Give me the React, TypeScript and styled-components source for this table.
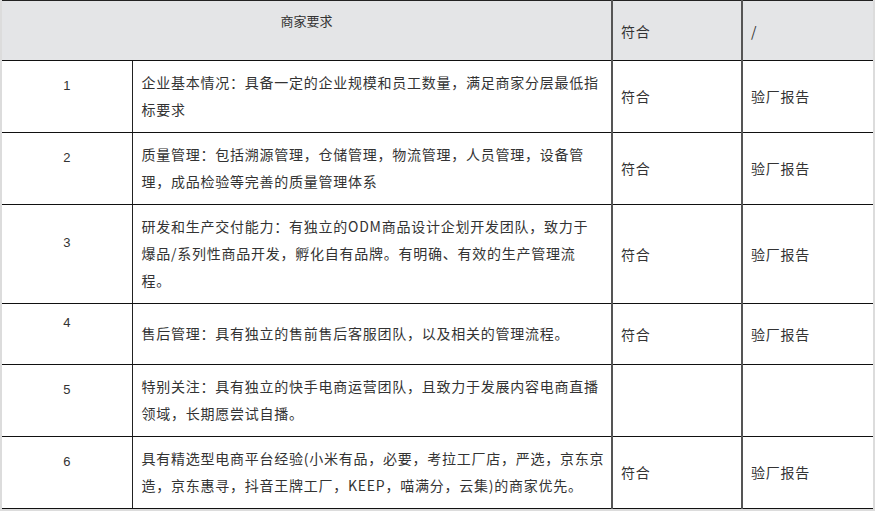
import React from 'react';
import styled, { createGlobalStyle } from 'styled-components';

const GlobalStyle = createGlobalStyle`
  html, body {
    margin: 0;
    padding: 0;
    background: #dcdcdc;
  }
  body {
    font-family: "Noto Sans CJK SC", "Liberation Sans", sans-serif;
    color: #333;
  }
`;

const Page = styled.div`
  width: 875px;
  height: 511px;
  overflow: hidden;
  padding-left: 2px;
  box-sizing: border-box;
`;

const Table = styled.table`
  width: 871px;
  border-collapse: collapse;
  table-layout: fixed;
  background: #fff;
  font-size: 14px;
  letter-spacing: 0.75px;
`;

const HeadRow = styled.tr`
  height: 60px;
  background: #e4e5e7;
`;

const HeadCell = styled.th<{ $wide?: boolean }>`
  font-weight: normal;
  text-align: ${p => (p.$wide ? 'center' : 'left')};
  vertical-align: ${p => (p.$wide ? 'top' : 'middle')};
  font-size: ${p => (p.$wide ? '13px' : '14px')};
  letter-spacing: ${p => (p.$wide ? '0' : '0.75px')};
  line-height: 20px;
  padding: ${p => (p.$wide ? '10px 0 0' : '0 8px')};
  border-top: 1px solid #222;
  border-bottom: 1px solid #111;
  border-left: ${p => (p.$wide ? 'none' : '2px solid #555')};
`;

const NoCell = styled.td`
  font-family: "Liberation Sans", "Noto Sans CJK SC", sans-serif;
  text-align: center;
  vertical-align: middle;
  font-size: 13px;
  letter-spacing: 0;
  line-height: 22px;
  padding: 8px 0 30px;
  border-bottom: 1px solid #111;
  border-right: 1px solid #222;
`;

const TextCell = styled.td`
  vertical-align: middle;
  line-height: 27px;
  padding: 8px 6px 9px 9px;
  border-bottom: 1px solid #111;
`;

const Line = styled.span`
  display: block;
  white-space: nowrap;
`;

const ValueCell = styled.td`
  vertical-align: middle;
  line-height: 27px;
  padding: 8px;
  border-bottom: 1px solid #111;
  border-left: 2px solid #555;
`;

type Row = { no: number; lines: string[]; result: string; proof: string };

const rows: Row[] = [
  {
    no: 1,
    lines: ['企业基本情况：具备一定的企业规模和员工数量，满足商家分层最低指', '标要求'],
    result: '符合',
    proof: '验厂报告',
  },
  {
    no: 2,
    lines: ['质量管理：包括溯源管理，仓储管理，物流管理，人员管理，设备管', '理，成品检验等完善的质量管理体系'],
    result: '符合',
    proof: '验厂报告',
  },
  {
    no: 3,
    lines: [
      '研发和生产交付能力：有独立的ODM商品设计企划开发团队，致力于',
      '爆品/系列性商品开发，孵化自有品牌。有明确、有效的生产管理流',
      '程。',
    ],
    result: '符合',
    proof: '验厂报告',
  },
  {
    no: 4,
    lines: ['售后管理：具有独立的售前售后客服团队，以及相关的管理流程。'],
    result: '符合',
    proof: '验厂报告',
  },
  {
    no: 5,
    lines: ['特别关注：具有独立的快手电商运营团队，且致力于发展内容电商直播', '领域，长期愿尝试自播。'],
    result: '',
    proof: '',
  },
  {
    no: 6,
    lines: [
      '具有精选型电商平台经验(小米有品，必要，考拉工厂店，严选，京东京',
      '造，京东惠寻，抖音王牌工厂，KEEP，喵满分，云集)的商家优先。',
    ],
    result: '符合',
    proof: '验厂报告',
  },
];

export default function App() {
  return (
    <Page>
      <GlobalStyle />
      <Table>
        <colgroup>
          <col style={{ width: 130 }} />
          <col style={{ width: 480 }} />
          <col style={{ width: 130 }} />
          <col style={{ width: 131 }} />
        </colgroup>
        <thead>
          <HeadRow>
            <HeadCell $wide colSpan={2}>商家要求</HeadCell>
            <HeadCell>符合</HeadCell>
            <HeadCell>/</HeadCell>
          </HeadRow>
        </thead>
        <tbody>
          {rows.map(r => (
            <tr key={r.no}>
              <NoCell>{r.no}</NoCell>
              <TextCell>
                {r.lines.map((l, i) => (
                  <Line key={i}>{l}</Line>
                ))}
              </TextCell>
              <ValueCell>{r.result}</ValueCell>
              <ValueCell>{r.proof}</ValueCell>
            </tr>
          ))}
        </tbody>
      </Table>
    </Page>
  );
}
